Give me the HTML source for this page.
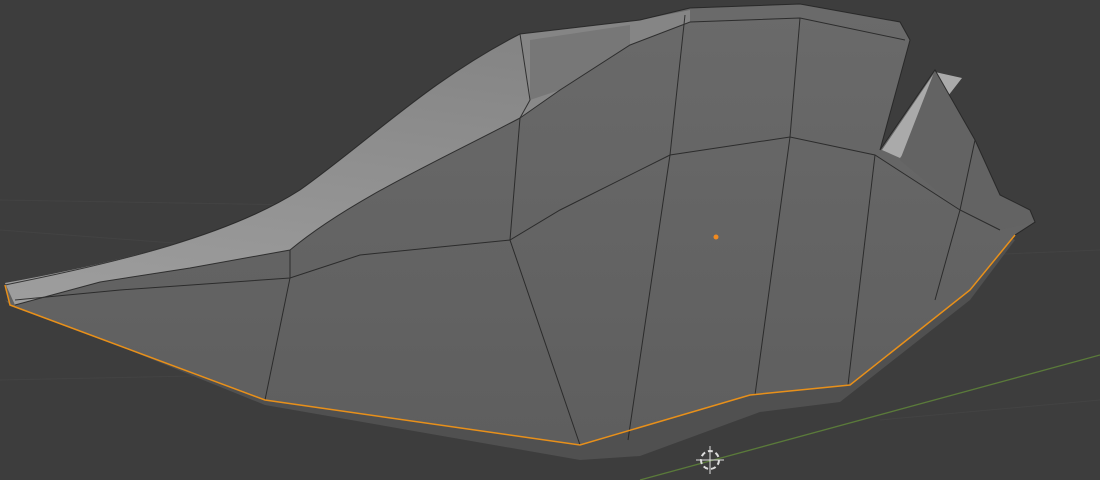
<!DOCTYPE html>
<html><head><style>
html,body{margin:0;padding:0;background:#3d3d3d;width:1100px;height:480px;overflow:hidden}
svg{display:block}
</style></head><body>
<svg width="1100" height="480" viewBox="0 0 1100 480" xmlns="http://www.w3.org/2000/svg">
<defs>
<linearGradient id="body" x1="0" y1="0" x2="0" y2="1">
<stop offset="0" stop-color="#6a6a6a"/><stop offset="1" stop-color="#5e5e5e"/>
</linearGradient>
<linearGradient id="rim" x1="0" y1="1" x2="0.3" y2="0">
<stop offset="0" stop-color="#9e9e9e"/><stop offset="1" stop-color="#858585"/>
</linearGradient>
</defs>
<g stroke="#434343" stroke-width="1" fill="none">
<line x1="0" y1="230" x2="200" y2="245"/>
<line x1="0" y1="200" x2="300" y2="205"/>
<line x1="0" y1="380" x2="240" y2="375"/>
<line x1="980" y1="255" x2="1100" y2="250"/>
<line x1="880" y1="420" x2="1100" y2="400"/>
</g>
<line x1="640" y1="480" x2="1100" y2="355" stroke="#5a7a3a" stroke-width="1.3"/>
<polygon points="5,300 265,405 580,460 640,456 760,412 840,402 970,300 1015,240 1000,232 970,290 850,385 750,395 580,445 265,400 10,305" fill="#505050"/>
<path d="M5,283 C120,262 230,235 300,190 C370,140 430,80 520,34 L640,20 690,8 800,4 900,22 910,40 880,150 935,70 975,140 1000,195 1030,210 1035,222 1015,235 970,290 850,385 750,395 580,445 265,400 10,305 Z" fill="url(#body)"/>
<path d="M5,283 C120,262 230,235 300,190 C370,140 430,80 520,34 L640,20 690,10 690,22 630,45 560,90 520,118 C440,160 350,200 290,250 L190,268 100,282 15,305 Z" fill="url(#rim)"/>
<polygon points="530,40 630,25 630,45 560,90 530,100" fill="#777"/>
<polygon points="935,72 962,78 900,158 882,150" fill="#aaa"/>
<polygon points="935,70 975,140 1000,195 1030,210 1035,222 1000,230 960,210 900,160" fill="#636363"/>
<g stroke="#222" stroke-width="1" fill="none" opacity="0.85">
<path d="M5,285 C120,262 230,235 300,190 C370,140 430,80 520,34 L640,20 690,8 800,4 900,22 910,40 880,150"/>
<polyline points="880,150 935,70 975,140 1000,195 1030,210 1035,222 1015,235"/>
<polyline points="15,300 120,290 290,278 360,255 510,240 560,210 670,155 790,137 875,155 960,210 1000,230"/>
<path d="M15,305 L100,282 190,268 290,250 C350,200 440,160 520,118 L560,90 630,45 690,22 800,18 905,40"/>
<polyline points="290,250 290,278 265,400"/>
<polyline points="520,118 510,240 580,445"/>
<polyline points="685,15 670,155 628,440"/>
<polyline points="800,18 790,137 755,395"/>
<polyline points="875,155 848,385"/>
<polyline points="975,140 960,210 935,300"/>
<polyline points="520,34 530,100 520,118"/>
</g>
<polyline points="5,285 10,305 265,400 580,445 750,395 850,385 970,290 1015,235" fill="none" stroke="#e8901a" stroke-width="1.5"/>
<circle cx="716" cy="237" r="2.5" fill="#f08a20"/>
<circle cx="710" cy="460" r="9" fill="none" stroke="#ddd" stroke-width="2" stroke-dasharray="5 3"/>
<line x1="710" y1="446" x2="710" y2="474" stroke="#ddd" stroke-width="1"/>
<line x1="696" y1="460" x2="724" y2="460" stroke="#ddd" stroke-width="1"/>
</svg>
</body></html>
